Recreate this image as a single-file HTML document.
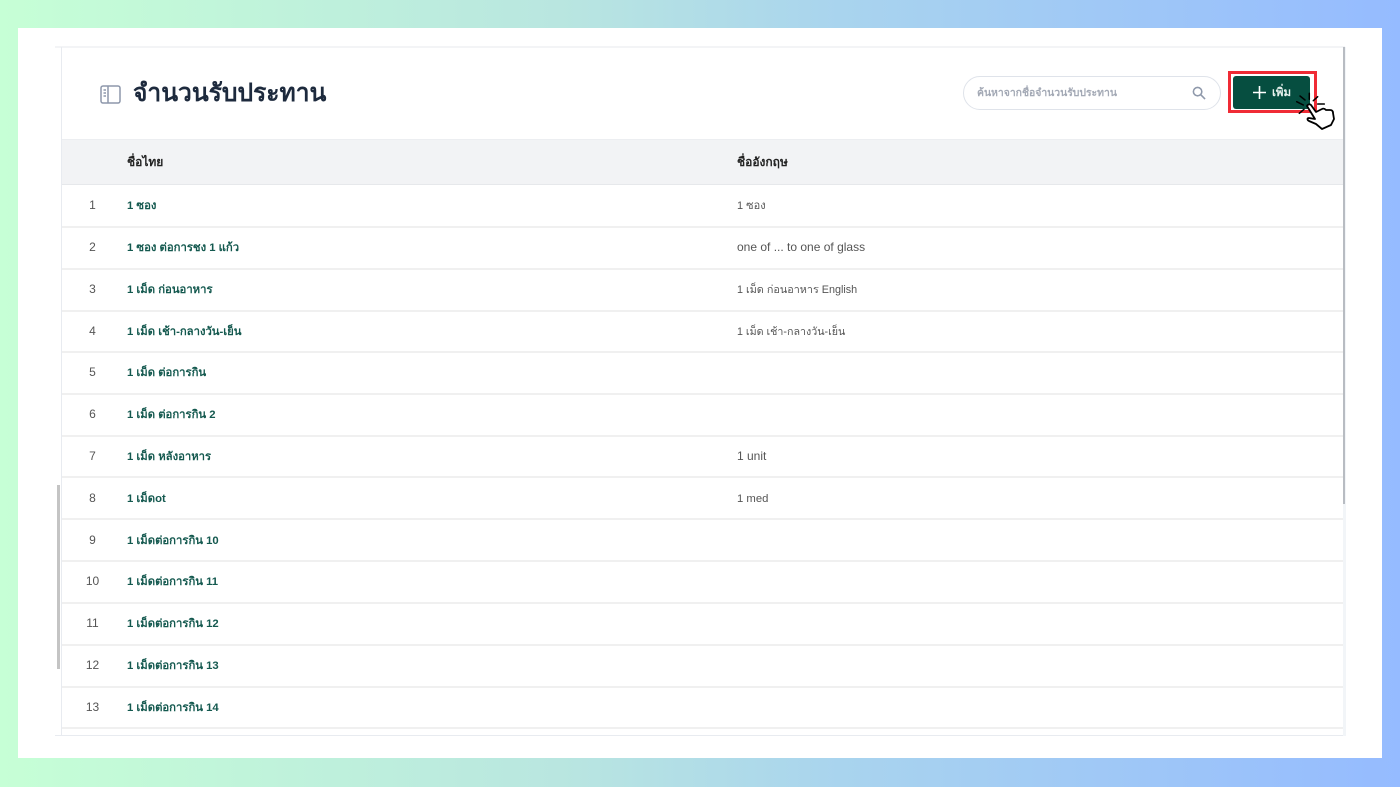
<!DOCTYPE html>
<html lang="th"><head><meta charset="utf-8"><title>จำนวนรับประทาน</title>
<style>
*{box-sizing:border-box}
html,body{margin:0;padding:0;width:1400px;height:787px;overflow:hidden;font-family:"Liberation Sans","Noto Sans CJK SC",sans-serif}
body{position:relative;background:linear-gradient(90deg,#c6ffd6 0%,#b9e6e0 40%,#a9d4ee 60%,#95bbff 100%)}
.a{position:absolute}
.white{left:18px;top:28px;width:1364px;height:730px;background:#fff}
.row{position:absolute;left:62px;width:1281px;height:2px;background:#f0f0f0}
.n,.t,.e{position:absolute;font-size:12px;line-height:16px;white-space:nowrap}
.n{left:72.5px;width:40px;text-align:center;color:#555}
.t{left:127px;color:#14594f;font-weight:700;font-size:11.3px;margin-top:1px}
.e{left:737px;color:#555}
.s{margin-top:1px}
.h{position:absolute;top:154px;font-size:12px;line-height:16px;font-weight:700;color:#222;white-space:nowrap}
</style></head><body>
<div class="a white"></div>
<div class="a" style="left:55px;top:46px;width:1290px;height:2px;background:#f3f4f6"></div>
<div class="a" style="left:61px;top:47px;width:1px;height:689px;background:#e8ebf0"></div>
<div class="a" style="left:55px;top:735px;width:1290px;height:1px;background:#e8ebf0"></div>
<div class="a" style="left:1343px;top:47px;width:3px;height:689px;background:#f2f5f8"></div>
<div class="a" style="left:1343px;top:47px;width:2px;height:457px;background:#b8bcc2"></div>
<div class="a" style="left:56.5px;top:485px;width:3px;height:184px;background:#c4c4c4"></div>

<svg class="a" style="left:100px;top:85px" width="21" height="19" viewBox="0 0 21 19" fill="none" stroke="#8d97ab" stroke-width="1.5"><rect x="1" y="1" width="19" height="17" rx="2"/><path d="M8 1v17M3.500 5h2.500M3.500 8h2.500M3.500 11h2.500"/></svg>
<div class="a" style="left:133px;top:76px;font-size:24.6px;line-height:36px;font-weight:700;color:#1d2a3d;white-space:nowrap">จำนวนรับประทาน</div>

<div class="a" style="left:963px;top:76px;width:258px;height:34px;border:1.500px solid #dfe3ea;border-radius:17px;background:#fff"></div>
<div class="a" style="left:977px;top:86px;font-size:10.4px;line-height:16px;font-weight:700;color:#a3a9b5;white-space:nowrap">ค้นหาจากชื่อจำนวนรับประทาน</div>
<svg class="a" style="left:1192px;top:86px" width="14" height="14" viewBox="0 0 15 15" fill="none" stroke="#8f99ab" stroke-width="1.700"><circle cx="6" cy="6" r="4.500"/><path d="M9.500 9.500L14 14"/></svg>

<div class="a" style="left:1228px;top:71px;width:89px;height:42px;border:3px solid #f02b35"></div>
<div class="a" style="left:1233px;top:76px;width:77px;height:33px;border-radius:3px;background:#064e40"></div>
<svg class="a" style="left:1253px;top:86px" width="13" height="13" viewBox="0 0 13 13" stroke="#fff" stroke-width="1.600"><path d="M6.500 0v13M0 6.500h13"/></svg>
<div class="a" style="left:1272px;top:85px;font-size:11.500px;line-height:16px;font-weight:700;color:#e8f2ee;white-space:nowrap">เพิ่ม</div>

<svg class="a" style="left:1295px;top:90px" width="46" height="42" viewBox="0 0 46 42" fill="none" stroke="#000" stroke-linecap="round" stroke-linejoin="round"><path stroke-width="1.500" d="M14.300 3.300v6M22.700 6.700l-4.400 4M29.300 14h-6.600M1.700 11.700l6.600 3.300M5 6l5 4M4.300 23.300l4.700-4"/><path stroke-width="1.800" fill="#fff" d="M12 16c1-2 3-2 4-1l5 7 6-3c2-1 3 0 4 1l4 0c2 0 3 1 3 3l1 6-3 6-9 4-6-5-7-3c-2-1-2-3 0-3l6 1z"/></svg>

<div class="a" style="left:62px;top:139px;width:1281px;height:46px;background:#f2f3f5;border-top:1px solid #eceef1;border-bottom:1px solid #e6e8eb"></div>
<div class="h" style="left:127px">ชื่อไทย</div>
<div class="h" style="left:737px">ชื่ออังกฤษ</div>

<div class="n" style="top:197px">1</div><div class="t" style="top:197px">1 ซอง</div><div class="e s" style="top:197px;font-size:11px">1 ซอง</div><div class="row" style="top:226px"></div>
<div class="n" style="top:239px">2</div><div class="t" style="top:239px">1 ซอง ต่อการชง 1 แก้ว</div><div class="e" style="top:239px">one of ... to one of glass</div><div class="row" style="top:268px"></div>
<div class="n" style="top:281px">3</div><div class="t" style="top:281px">1 เม็ด ก่อนอาหาร</div><div class="e s" style="top:281px;font-size:10.8px">1 เม็ด ก่อนอาหาร English</div><div class="row" style="top:310px"></div>
<div class="n" style="top:323px">4</div><div class="t" style="top:323px">1 เม็ด เช้า-กลางวัน-เย็น</div><div class="e s" style="top:323px;font-size:10.7px">1 เม็ด เช้า-กลางวัน-เย็น</div><div class="row" style="top:351px"></div>
<div class="n" style="top:364px">5</div><div class="t" style="top:364px">1 เม็ด ต่อการกิน</div><div class="row" style="top:393px"></div>
<div class="n" style="top:406px">6</div><div class="t" style="top:406px">1 เม็ด ต่อการกิน 2</div><div class="row" style="top:435px"></div>
<div class="n" style="top:448px">7</div><div class="t" style="top:448px">1 เม็ด หลังอาหาร</div><div class="e" style="top:448px">1 unit</div><div class="row" style="top:476px"></div>
<div class="n" style="top:490px">8</div><div class="t" style="top:490px">1 เม็ดot</div><div class="e s" style="top:490px;font-size:11.3px">1 med</div><div class="row" style="top:518px"></div>
<div class="n" style="top:532px">9</div><div class="t" style="top:532px">1 เม็ดต่อการกิน 10</div><div class="row" style="top:560px"></div>
<div class="n" style="top:573px">10</div><div class="t" style="top:573px">1 เม็ดต่อการกิน 11</div><div class="row" style="top:602px"></div>
<div class="n" style="top:615px">11</div><div class="t" style="top:615px">1 เม็ดต่อการกิน 12</div><div class="row" style="top:644px"></div>
<div class="n" style="top:657px">12</div><div class="t" style="top:657px">1 เม็ดต่อการกิน 13</div><div class="row" style="top:686px"></div>
<div class="n" style="top:699px">13</div><div class="t" style="top:699px">1 เม็ดต่อการกิน 14</div><div class="row" style="top:727px"></div>
</body></html>
